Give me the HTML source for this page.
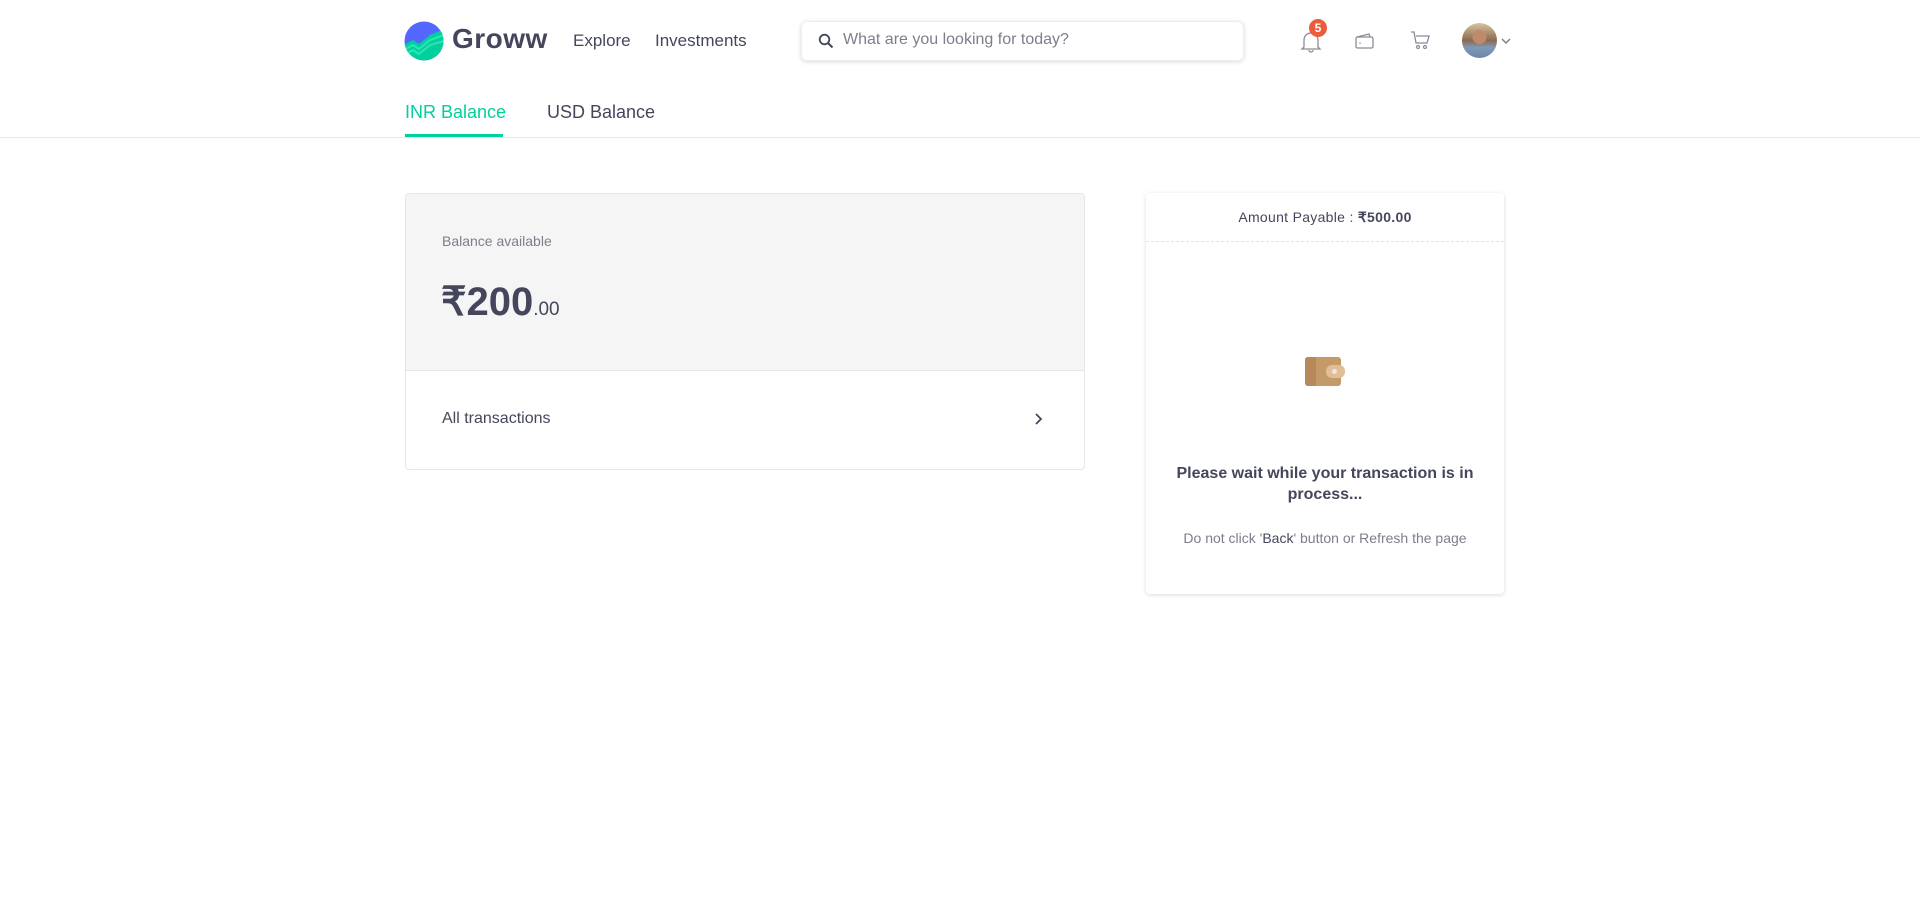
<!DOCTYPE html>
<html><head><meta charset="utf-8"><style>
*{box-sizing:border-box;margin:0;padding:0}
body{width:1920px;height:924px;background:#fff;font-family:"Liberation Sans",sans-serif;color:#44475b;position:relative;overflow:hidden}
.a{position:absolute}
</style></head><body>
<svg class="a" style="left:404px;top:21px" width="40" height="40" viewBox="0 0 40 40">
<defs><clipPath id="c"><circle cx="20" cy="20" r="19.5"/></clipPath></defs>
<g clip-path="url(#c)"><rect width="40" height="40" fill="#5367ff"/>
<path d="M0 24 L9 19 L15 23 L26 14 L40 8 L40 40 L0 40Z" fill="#00d09c"/>
<path d="M0 29 L9 24 L15 28 L26 19 L40 14" stroke="#2fe3b5" stroke-width="2" fill="none"/>
<path d="M0 34 L9 29 L15 33 L26 24 L40 20" stroke="#2fe3b5" stroke-width="2" fill="none"/></g></svg>
<div class="a" style="left:452px;top:23px;font-size:28px;font-weight:bold;color:#44475b;letter-spacing:0.5px">Groww</div>
<div class="a" style="left:573px;top:31px;font-size:17px">Explore</div>
<div class="a" style="left:655px;top:31px;font-size:17px">Investments</div>
<div class="a" style="left:801px;top:21px;width:443px;height:40px;border-radius:6px;box-shadow:0 1px 5px rgba(0,0,0,.15);border:1px solid #eee"></div>
<svg class="a" style="left:818px;top:33px" width="16" height="16" viewBox="0 0 16 16"><circle cx="6.5" cy="6.5" r="4.8" stroke="#44475b" stroke-width="1.8" fill="none"/><path d="M10 10l4.5 4.5" stroke="#44475b" stroke-width="2"/></svg>
<div class="a" style="left:843px;top:31px;font-size:16px;color:#7c7e8c">What are you looking for today?</div>
<svg class="a" style="left:1300px;top:30px" width="22" height="24" viewBox="0 0 22 24"><path d="M4 17 V10 a7 7 0 0 1 14 0 V17 l2 2 H2Z" stroke="#8a8b99" stroke-width="1.3" fill="none"/><path d="M9 20a2 2 0 0 0 4 0" stroke="#8a8b99" stroke-width="1.3" fill="none"/></svg>
<div class="a" style="left:1309px;top:19px;width:18px;height:18px;border-radius:50%;background:#eb5b3c;color:#fff;font-size:12px;font-weight:bold;text-align:center;line-height:18px">5</div>
<svg class="a" style="left:1355px;top:31px" width="20" height="20" viewBox="0 0 20 20"><path d="M2 6 L14 3 L15 6" stroke="#8a8b99" stroke-width="1.3" fill="none"/><rect x="1" y="6" width="17" height="11" rx="1.5" stroke="#8a8b99" stroke-width="1.3" fill="none"/><circle cx="5" cy="12" r="0.8" fill="#8a8b99"/></svg>
<svg class="a" style="left:1410px;top:30px" width="22" height="20" viewBox="0 0 22 20"><path d="M1 2 H4 L6 13 H17 L19 6 H6" stroke="#8a8b99" stroke-width="1.3" fill="none"/><circle cx="8" cy="17" r="1.5" stroke="#8a8b99" stroke-width="1.2" fill="none"/><circle cx="15" cy="17" r="1.5" stroke="#8a8b99" stroke-width="1.2" fill="none"/></svg>
<div class="a" style="left:1462px;top:23px;width:35px;height:35px;border-radius:50%;background:radial-gradient(circle at 50% 40%,#c08a6a 0 25%,transparent 26%),linear-gradient(to bottom,#d9c3a0 0%,#8a6a50 50%,#7f9ab8 70%,#6a86a6 100%)"></div>
<svg class="a" style="left:1500px;top:37px" width="12" height="8" viewBox="0 0 12 8"><path d="M2 2l4 4 4-4" stroke="#7c7e8c" stroke-width="1.5" fill="none"/></svg>
<div class="a" style="left:405px;top:102px;font-size:18px;color:#00d09c">INR Balance</div>
<div class="a" style="left:547px;top:102px;font-size:18px;color:#44475b">USD Balance</div>
<div class="a" style="left:405px;top:134px;width:98px;height:3px;background:#00d09c"></div>
<div class="a" style="left:0;top:137px;width:1920px;height:1px;background:#e9e9eb"></div>
<div class="a" style="left:405px;top:193px;width:680px;height:277px;border:1px solid #e6e6e6;border-radius:4px;overflow:hidden">
<div style="height:177px;background:#f5f5f5;border-bottom:1px solid #e6e6e6;position:relative">
<div class="a" style="left:36px;top:39px;font-size:14px;color:#7c7e8c">Balance available</div>
<div class="a" style="left:35px;top:85px;font-size:40px;font-weight:bold;color:#44475b">₹200<span style="font-size:19px;font-weight:normal">.00</span></div>
</div>
<div class="a" style="left:36px;top:216px;font-size:16px;color:#44475b">All transactions</div>
<svg class="a" style="left:626px;top:218px" width="12" height="14" viewBox="0 0 12 14"><path d="M4 2l5 5-5 5" stroke="#44475b" stroke-width="1.8" fill="none"/></svg>
</div>
<div class="a" style="left:1146px;top:193px;width:358px;height:401px;border-radius:4px;box-shadow:0 1px 4px rgba(0,0,0,.15)">
<div style="height:49px;border-bottom:1px dashed #e2e2e2;text-align:center;line-height:49px;font-size:14px;color:#44475b;letter-spacing:0.3px">Amount Payable : <b>₹500.00</b></div>
<div class="a" style="left:159px;top:164px;width:36px;height:29px;border-radius:3px;background:#c49a68"></div>
<div class="a" style="left:159px;top:164px;width:11px;height:29px;border-radius:3px 0 0 3px;background:#b8895a"></div>
<div class="a" style="left:180px;top:172px;width:19px;height:13px;border-radius:6px;background:#e0bf98"></div>
<div class="a" style="left:186px;top:176px;width:5px;height:5px;border-radius:50%;background:#f3e6d6"></div>
<div class="a" style="left:20px;top:270px;width:318px;text-align:center;font-size:16px;font-weight:bold;color:#44475b;line-height:21px">Please wait while your transaction is in process...</div>
<div class="a" style="left:0;top:337px;width:358px;text-align:center;font-size:14px;color:#7c7e8c">Do not click '<b style="color:#44475b;font-weight:normal">Back</b>' button or Refresh the page</div>
</div>
</body></html>
